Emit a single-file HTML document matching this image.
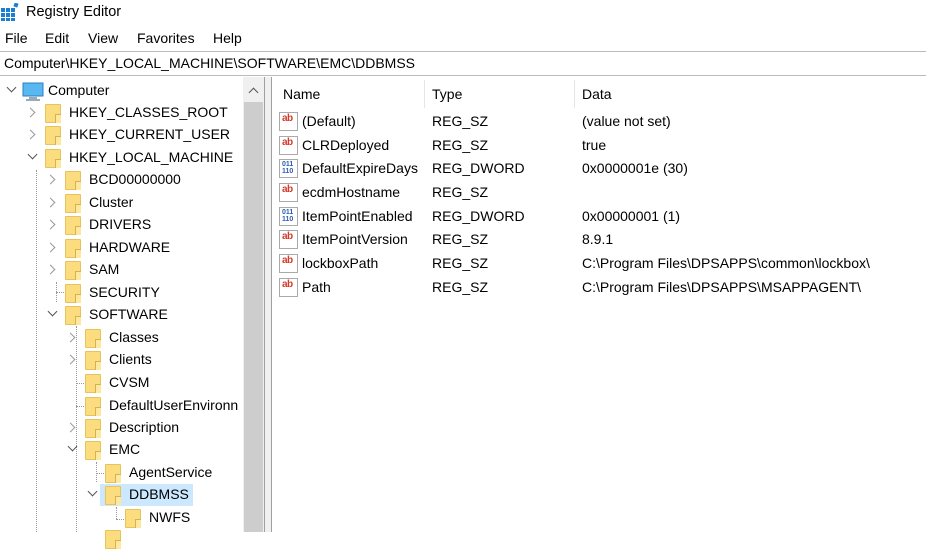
<!DOCTYPE html>
<html><head><meta charset="utf-8"><style>
*{margin:0;padding:0;box-sizing:border-box}
body{width:926px;height:532px;overflow:hidden;background:#fff;font-family:"Liberation Sans",sans-serif;font-size:14px;color:#000;position:relative}
.a{position:absolute;white-space:nowrap}
.fold{position:absolute;width:16px;height:19px;background:#fbdc7e;border:1px solid #e8c25a;border-radius:1px}
.fold:after{content:"";position:absolute;right:-1px;bottom:-1px;width:5px;height:8px;border-left:1px solid #d9b04a;border-top:1px solid #d9b04a;background:#fde8a0}
.chev{position:absolute;width:7px;height:7px;border-right:1.5px solid #999;border-bottom:1.5px solid #999}
.r{transform:rotate(-45deg)}
.d{transform:rotate(45deg);border-color:#555}
.dot{position:absolute;border-left:1px dotted #999}
.doth{position:absolute;border-top:1px dotted #999;width:8px}
.ab{position:absolute;width:19px;height:19px;border:1px solid #aaa;background:#fff;font-size:10px;font-weight:bold;color:#d43a2a;line-height:12px;padding-left:2px;letter-spacing:-0.5px}
.bin{position:absolute;width:19px;height:19px;border:1px solid #aaa;background:#fff;font-size:7px;font-weight:bold;color:#2a5db0;line-height:7px;padding:1px 0 0 2px}
</style></head><body>
<!-- title -->
<svg class="a" style="left:1px;top:3px" width="18" height="18" viewBox="0 0 18 18">
<g fill="#1a7fd4"><rect x="0" y="5" width="4" height="4"/><rect x="5" y="5" width="4" height="4"/><rect x="10" y="5" width="4" height="4"/><rect x="0" y="10" width="4" height="4"/><rect x="5" y="10" width="4" height="4"/><rect x="10" y="10" width="4" height="4"/><rect x="0" y="15" width="4" height="3"/><rect x="5" y="15" width="4" height="3"/><rect x="10" y="15" width="4" height="3"/><rect x="13" y="0" width="4" height="4" transform="rotate(20 15 2)"/></g></svg>
<div class="a" style="left:26px;top:4px;font-size:14.5px">Registry Editor</div>
<div class="a" style="left:5px;top:30px">File</div>
<div class="a" style="left:45px;top:30px">Edit</div>
<div class="a" style="left:88px;top:30px">View</div>
<div class="a" style="left:137px;top:30px">Favorites</div>
<div class="a" style="left:213px;top:30px">Help</div>
<div class="a" style="left:0;top:51px;width:926px;height:25px;border-top:1px solid #bbb;border-bottom:1px solid #bbb"></div>
<div class="a" style="left:4px;top:55px">Computer\HKEY_LOCAL_MACHINE\SOFTWARE\EMC\DDBMSS</div>
<!-- scrollbar & splitter -->
<div class="a" style="left:243px;top:77px;width:21px;height:455px;background:#f0f0f0"></div>
<div class="a" style="left:244px;top:102px;width:19px;height:430px;background:#cdcdcd"></div>
<div class="chev a" style="left:250px;top:89px;transform:rotate(-135deg);border-color:#555"></div>
<div class="a" style="left:264px;top:77px;width:8px;height:455px;background:#f0f0f0;border-left:1px solid #a0a0a0;border-right:1px solid #a0a0a0"></div>
<!-- dotted lines -->
<div class="dot" style="left:36px;top:170px;height:362px"></div>
<div class="dot" style="left:56px;top:282px;height:20px"></div>
<div class="doth" style="left:56px;top:292px"></div>
<div class="dot" style="left:76px;top:326px;height:206px"></div>
<div class="doth" style="left:76px;top:383px"></div>
<div class="doth" style="left:76px;top:406px"></div>
<div class="dot" style="left:96px;top:462px;height:20px"></div>
<div class="doth" style="left:96px;top:473px"></div>
<div class="dot" style="left:116px;top:507px;height:12px"></div>
<div class="doth" style="left:116px;top:519px"></div>
<!-- tree -->
<div class="chev d" style="left:8px;top:84px"></div>
<svg class="a" style="left:22px;top:82px" width="22" height="20"><rect x="1" y="1" width="20" height="13" fill="#5ab8f0" stroke="#2b7fc4"/><rect x="7" y="15" width="8" height="2" fill="#9ab"/><rect x="4" y="17" width="14" height="2" fill="#9ab"/></svg>
<div class="a" style="left:48px;top:82px">Computer</div>

<div class="chev r" style="left:27px;top:109px"></div><div class="fold" style="left:45px;top:104px"></div><div class="a" style="left:69px;top:104px">HKEY_CLASSES_ROOT</div>
<div class="chev r" style="left:27px;top:131px"></div><div class="fold" style="left:45px;top:126px"></div><div class="a" style="left:69px;top:126px">HKEY_CURRENT_USER</div>
<div class="chev d" style="left:29px;top:151px"></div><div class="fold" style="left:45px;top:149px"></div><div class="a" style="left:69px;top:149px">HKEY_LOCAL_MACHINE</div>

<div class="chev r" style="left:47px;top:176px"></div><div class="fold" style="left:65px;top:171px"></div><div class="a" style="left:89px;top:171px">BCD00000000</div>
<div class="chev r" style="left:47px;top:199px"></div><div class="fold" style="left:65px;top:194px"></div><div class="a" style="left:89px;top:194px">Cluster</div>
<div class="chev r" style="left:47px;top:221px"></div><div class="fold" style="left:65px;top:216px"></div><div class="a" style="left:89px;top:216px">DRIVERS</div>
<div class="chev r" style="left:47px;top:244px"></div><div class="fold" style="left:65px;top:239px"></div><div class="a" style="left:89px;top:239px">HARDWARE</div>
<div class="chev r" style="left:47px;top:266px"></div><div class="fold" style="left:65px;top:261px"></div><div class="a" style="left:89px;top:261px">SAM</div>
<div class="fold" style="left:65px;top:284px"></div><div class="a" style="left:89px;top:284px">SECURITY</div>
<div class="chev d" style="left:49px;top:308px"></div><div class="fold" style="left:65px;top:306px"></div><div class="a" style="left:89px;top:306px">SOFTWARE</div>

<div class="chev r" style="left:67px;top:334px"></div><div class="fold" style="left:85px;top:329px"></div><div class="a" style="left:109px;top:329px">Classes</div>
<div class="chev r" style="left:67px;top:356px"></div><div class="fold" style="left:85px;top:351px"></div><div class="a" style="left:109px;top:351px">Clients</div>
<div class="fold" style="left:85px;top:374px"></div><div class="a" style="left:109px;top:374px">CVSM</div>
<div class="fold" style="left:85px;top:397px"></div><div class="a" style="left:109px;top:397px;width:134px;overflow:hidden">DefaultUserEnvironn</div>
<div class="chev r" style="left:67px;top:424px"></div><div class="fold" style="left:85px;top:419px"></div><div class="a" style="left:109px;top:419px">Description</div>
<div class="chev d" style="left:69px;top:443px"></div><div class="fold" style="left:85px;top:441px"></div><div class="a" style="left:109px;top:441px">EMC</div>

<div class="fold" style="left:105px;top:464px"></div><div class="a" style="left:129px;top:464px">AgentService</div>
<div class="a" style="left:100px;top:484px;width:93px;height:22px;background:#cce8ff"></div>
<div class="chev d" style="left:89px;top:488px"></div><div class="fold" style="left:105px;top:486px"></div><div class="a" style="left:129px;top:486px">DDBMSS</div>
<div class="fold" style="left:125px;top:509px"></div><div class="a" style="left:149px;top:509px">NWFS</div>
<div class="fold" style="left:105px;top:530px"></div>

<!-- right pane -->
<div class="a" style="left:424px;top:80px;width:1px;height:28px;background:#e5e5e5"></div>
<div class="a" style="left:574px;top:80px;width:1px;height:28px;background:#e5e5e5"></div>
<div class="a" style="left:283px;top:86px">Name</div>
<div class="a" style="left:432px;top:86px">Type</div>
<div class="a" style="left:582px;top:86px">Data</div>

<div class="ab" style="left:279px;top:112px">ab</div><div class="a" style="left:302px;top:113px">(Default)</div><div class="a" style="left:432px;top:113px">REG_SZ</div><div class="a" style="left:582px;top:113px">(value not set)</div>
<div class="ab" style="left:279px;top:136px">ab</div><div class="a" style="left:302px;top:137px">CLRDeployed</div><div class="a" style="left:432px;top:137px">REG_SZ</div><div class="a" style="left:582px;top:137px">true</div>
<div class="bin" style="left:279px;top:159px">011<br>110</div><div class="a" style="left:302px;top:160px">DefaultExpireDays</div><div class="a" style="left:432px;top:160px">REG_DWORD</div><div class="a" style="left:582px;top:160px">0x0000001e (30)</div>
<div class="ab" style="left:279px;top:183px">ab</div><div class="a" style="left:302px;top:184px">ecdmHostname</div><div class="a" style="left:432px;top:184px">REG_SZ</div>
<div class="bin" style="left:279px;top:207px">011<br>110</div><div class="a" style="left:302px;top:208px">ItemPointEnabled</div><div class="a" style="left:432px;top:208px">REG_DWORD</div><div class="a" style="left:582px;top:208px">0x00000001 (1)</div>
<div class="ab" style="left:279px;top:230px">ab</div><div class="a" style="left:302px;top:231px">ItemPointVersion</div><div class="a" style="left:432px;top:231px">REG_SZ</div><div class="a" style="left:582px;top:231px">8.9.1</div>
<div class="ab" style="left:279px;top:254px">ab</div><div class="a" style="left:302px;top:255px">lockboxPath</div><div class="a" style="left:432px;top:255px">REG_SZ</div><div class="a" style="left:582px;top:255px">C:\Program Files\DPSAPPS\common\lockbox\</div>
<div class="ab" style="left:279px;top:278px">ab</div><div class="a" style="left:302px;top:279px">Path</div><div class="a" style="left:432px;top:279px">REG_SZ</div><div class="a" style="left:582px;top:279px">C:\Program Files\DPSAPPS\MSAPPAGENT\</div>
</body></html>
